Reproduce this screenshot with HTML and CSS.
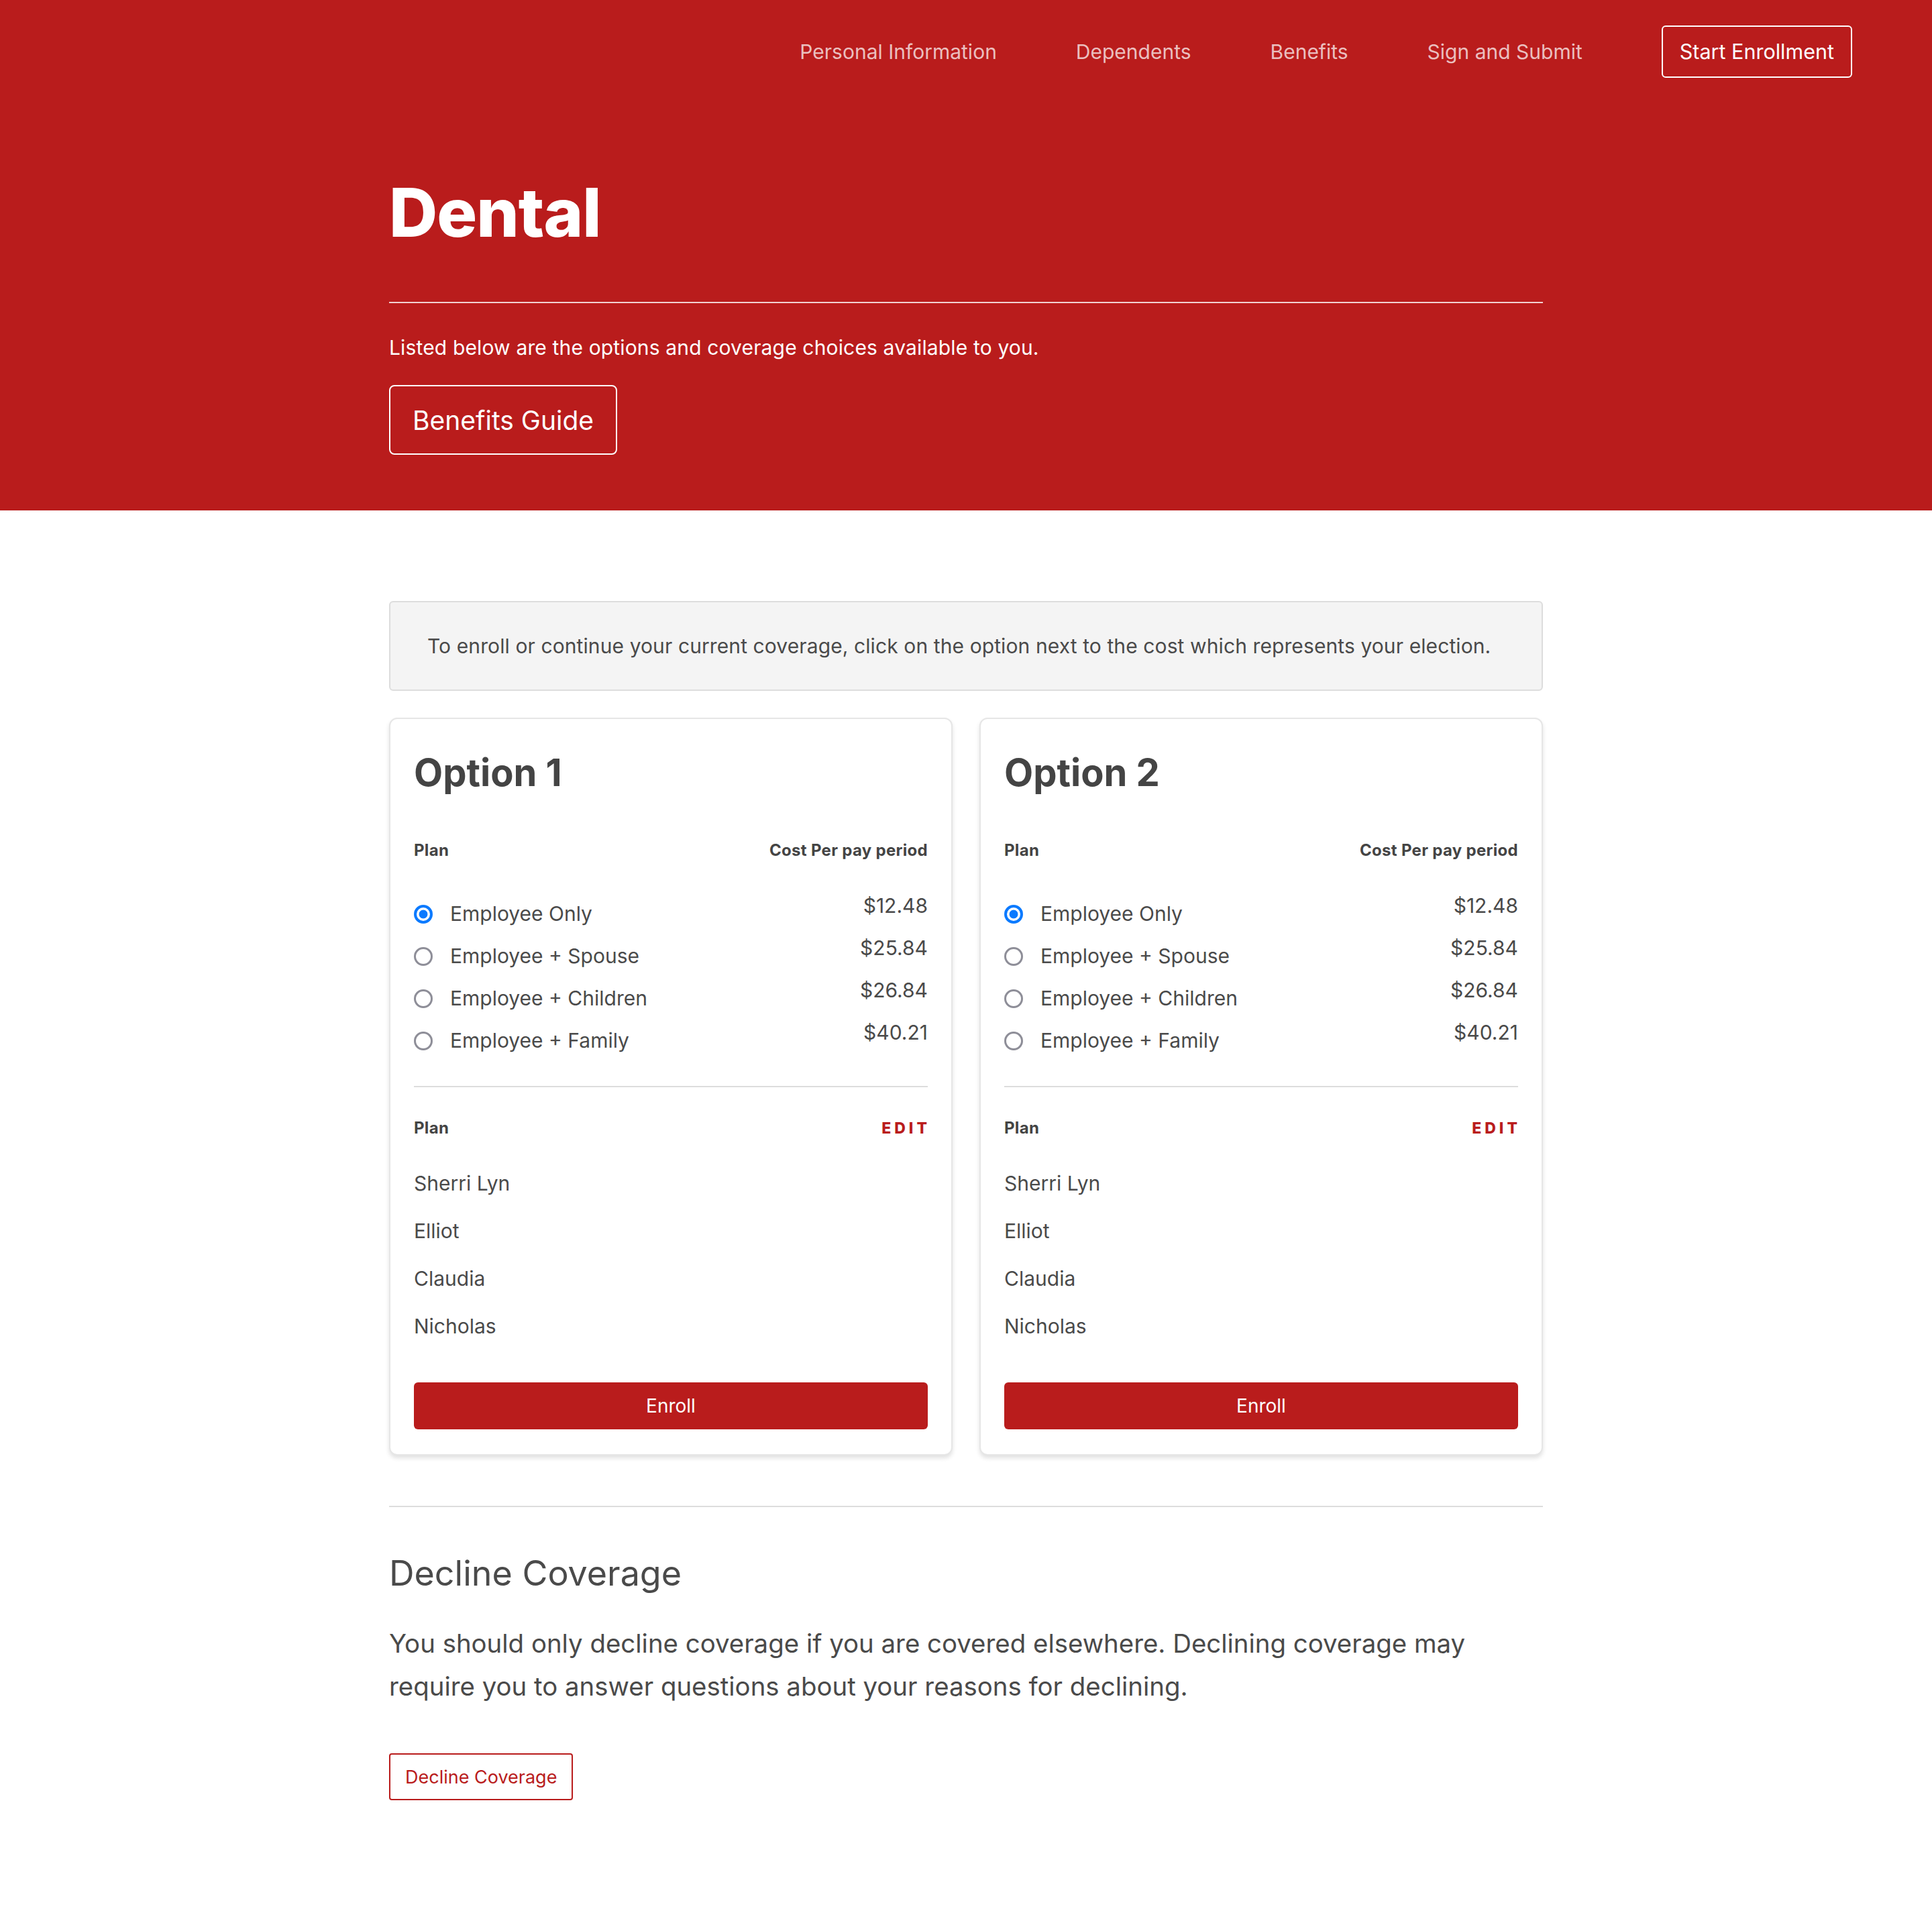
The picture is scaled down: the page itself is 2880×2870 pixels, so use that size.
FILE: index.html
```html
<!DOCTYPE html>
<html lang="en">
<head>
<meta charset="utf-8">
<title>Dental</title>
<link rel="stylesheet" href="styles.css">
</head>
<body>
<header class="hero">
  <nav class="topnav">
    <a class="nav-link" href="#">Personal Information</a>
    <a class="nav-link" href="#">Dependents</a>
    <a class="nav-link" href="#">Benefits</a>
    <a class="nav-link" href="#">Sign and Submit</a>
    <a class="nav-btn" href="#">Start Enrollment</a>
  </nav>
  <div class="container hero-body">
    <h1 class="hero-title">Dental</h1>
    <hr class="hero-rule">
    <p class="hero-text">Listed below are the options and coverage choices available to you.</p>
    <a class="guide-btn" href="#">Benefits Guide</a>
  </div>
</header>

<main class="container main">
  <div class="notice">To enroll or continue your current coverage, click on the option next to the cost which represents your election.</div>

  <div class="cards">
    <section class="card">
      <h2 class="card-title">Option 1</h2>
      <div class="label-row"><span class="label">Plan</span><span class="label">Cost Per pay period</span></div>
      <div class="plans">
        <label class="plan-row"><span class="radio checked"></span><span class="plan-name">Employee Only</span><span class="price">$12.48</span></label>
        <label class="plan-row"><span class="radio"></span><span class="plan-name">Employee + Spouse</span><span class="price">$25.84</span></label>
        <label class="plan-row"><span class="radio"></span><span class="plan-name">Employee + Children</span><span class="price">$26.84</span></label>
        <label class="plan-row"><span class="radio"></span><span class="plan-name">Employee + Family</span><span class="price">$40.21</span></label>
      </div>
      <hr class="card-rule">
      <div class="label-row second"><span class="label">Plan</span><a class="edit" href="#">EDIT</a></div>
      <ul class="names">
        <li>Sherri Lyn</li>
        <li>Elliot</li>
        <li>Claudia</li>
        <li>Nicholas</li>
      </ul>
      <button class="enroll-btn">Enroll</button>
    </section>

    <section class="card">
      <h2 class="card-title">Option 2</h2>
      <div class="label-row"><span class="label">Plan</span><span class="label">Cost Per pay period</span></div>
      <div class="plans">
        <label class="plan-row"><span class="radio checked"></span><span class="plan-name">Employee Only</span><span class="price">$12.48</span></label>
        <label class="plan-row"><span class="radio"></span><span class="plan-name">Employee + Spouse</span><span class="price">$25.84</span></label>
        <label class="plan-row"><span class="radio"></span><span class="plan-name">Employee + Children</span><span class="price">$26.84</span></label>
        <label class="plan-row"><span class="radio"></span><span class="plan-name">Employee + Family</span><span class="price">$40.21</span></label>
      </div>
      <hr class="card-rule">
      <div class="label-row second"><span class="label">Plan</span><a class="edit" href="#">EDIT</a></div>
      <ul class="names">
        <li>Sherri Lyn</li>
        <li>Elliot</li>
        <li>Claudia</li>
        <li>Nicholas</li>
      </ul>
      <button class="enroll-btn">Enroll</button>
    </section>
  </div>

  <hr class="section-rule">

  <section class="decline">
    <h2 class="decline-title">Decline Coverage</h2>
    <p class="decline-text">You should only decline coverage if you are covered elsewhere. Declining coverage may require you to answer questions about your reasons for declining.</p>
    <a class="decline-btn" href="#">Decline Coverage</a>
  </section>
</main>
</body>
</html>
```

FILE: styles.css
```css
* { box-sizing: border-box; }

html, body {
  margin: 0;
  padding: 0;
  background: #ffffff;
}

body {
  font-family: Inter, "Noto Sans", "Liberation Sans", sans-serif;
  color: #4a4a4a;
  min-height: 2870px;
}

a { text-decoration: none; }

.container {
  width: 1720px;
  margin: 0 auto;
}

/* ---------- hero ---------- */
.hero {
  background: #b91c1c;
  color: #ffffff;
  padding: 38px 0 83px;
}

.topnav {
  display: flex;
  justify-content: flex-end;
  align-items: center;
  gap: 118px;
  padding-right: 119px;
}

.nav-link {
  color: rgba(255, 255, 255, 0.72);
  font-size: 30px;
  line-height: 40px;
}

.nav-btn {
  color: #ffffff;
  font-size: 30.5px;
  line-height: 40px;
  border: 2px solid #ffffff;
  border-radius: 6px;
  padding: 0 25px;
  height: 78px;
  display: flex;
  align-items: center;
}

.hero-body {
  padding-top: 141px;
}

.hero-title {
  margin: 0;
  font-size: 100px;
  line-height: 120px;
  font-weight: 800;
  letter-spacing: -1px;
}

.hero-rule {
  margin: 73px 0 0;
  border: 0;
  height: 2px;
  background: rgba(255, 255, 255, 0.8);
}

.hero-text {
  margin: 42px 0 0;
  font-size: 30px;
  line-height: 48px;
  letter-spacing: 0.15px;
}

.guide-btn {
  display: inline-flex;
  align-items: center;
  margin-top: 32px;
  height: 104px;
  padding: 0 33px;
  border: 2px solid #ffffff;
  border-radius: 8px;
  color: #ffffff;
  font-size: 39px;
}

/* ---------- main ---------- */
.main {
  padding-top: 135px;
  padding-bottom: 188px;
}

.notice {
  background: #f4f4f4;
  border: 2px solid #dddddd;
  border-radius: 6px;
  padding: 41px 55px;
  font-size: 30px;
  line-height: 48px;
  letter-spacing: 0.1px;
  color: #4a4a4a;
  white-space: nowrap;
}

.cards {
  margin-top: 40px;
  display: grid;
  grid-template-columns: 1fr 1fr;
  gap: 40px;
}

.card {
  border: 2px solid #e6e6e6;
  border-radius: 12px;
  box-shadow: 0 4px 6px rgba(0, 0, 0, 0.12);
  padding: 47px 35px 37px;
  background: #ffffff;
}

.card-title {
  margin: 0;
  font-size: 56px;
  line-height: 67px;
  font-weight: 700;
  color: #444444;
}

.label-row {
  display: flex;
  justify-content: space-between;
  align-items: center;
  margin-top: 65px;
  height: 33px;
}

.label-row.second { margin-top: 44px; }

.label {
  font-size: 24px;
  font-weight: 700;
  letter-spacing: 0.3px;
  color: #444444;
}

.edit {
  font-size: 23px;
  font-weight: 800;
  letter-spacing: 5px;
  margin-right: -4px;
  color: #b91c1c;
}

.plans {
  margin-top: 47px;
  display: flex;
  flex-direction: column;
}

.plan-row {
  display: flex;
  align-items: flex-start;
  height: 63px;
  font-size: 30px;
  color: #4a4a4a;
}

.radio {
  flex: none;
  width: 28px;
  height: 28px;
  margin-top: 17.5px;
  border: 3px solid #8e8e98;
  border-radius: 50%;
  margin-right: 26px;
  background: #ffffff;
}

.radio.checked {
  border: 4px solid #0a7aff;
  background: radial-gradient(circle, #0a7aff 0 6px, #ffffff 6.8px);
}

.plan-name {
  flex: 1;
  line-height: 63px;
}

.price {
  line-height: 38px;
}

.card-rule {
  margin: 36px 0 0;
  border: 0;
  height: 2px;
  background: #dddddd;
}

.names {
  list-style: none;
  margin: 31px 0 0;
  padding: 0;
}

.names li {
  font-size: 30px;
  line-height: 71px;
  color: #4a4a4a;
}

.enroll-btn {
  display: block;
  width: 100%;
  margin-top: 48px;
  height: 70px;
  border: 0;
  border-radius: 6px;
  background: #b91c1c;
  color: #ffffff;
  font-family: inherit;
  font-size: 28px;
}

.section-rule {
  margin: 75px 0 0;
  border: 0;
  height: 2px;
  background: #dddddd;
}

.decline-title {
  margin: 68px 0 0;
  font-size: 52px;
  line-height: 62px;
  font-weight: 400;
  color: #4a4a4a;
}

.decline-text {
  margin: 42px 0 0;
  font-size: 38.4px;
  line-height: 63.5px;
  color: #4a4a4a;
}

.decline-btn {
  display: inline-flex;
  align-items: center;
  margin-top: 68px;
  height: 70px;
  padding: 0 22px;
  border: 2px solid #b91c1c;
  border-radius: 4px;
  color: #b91c1c;
  font-size: 27px;
}
```
